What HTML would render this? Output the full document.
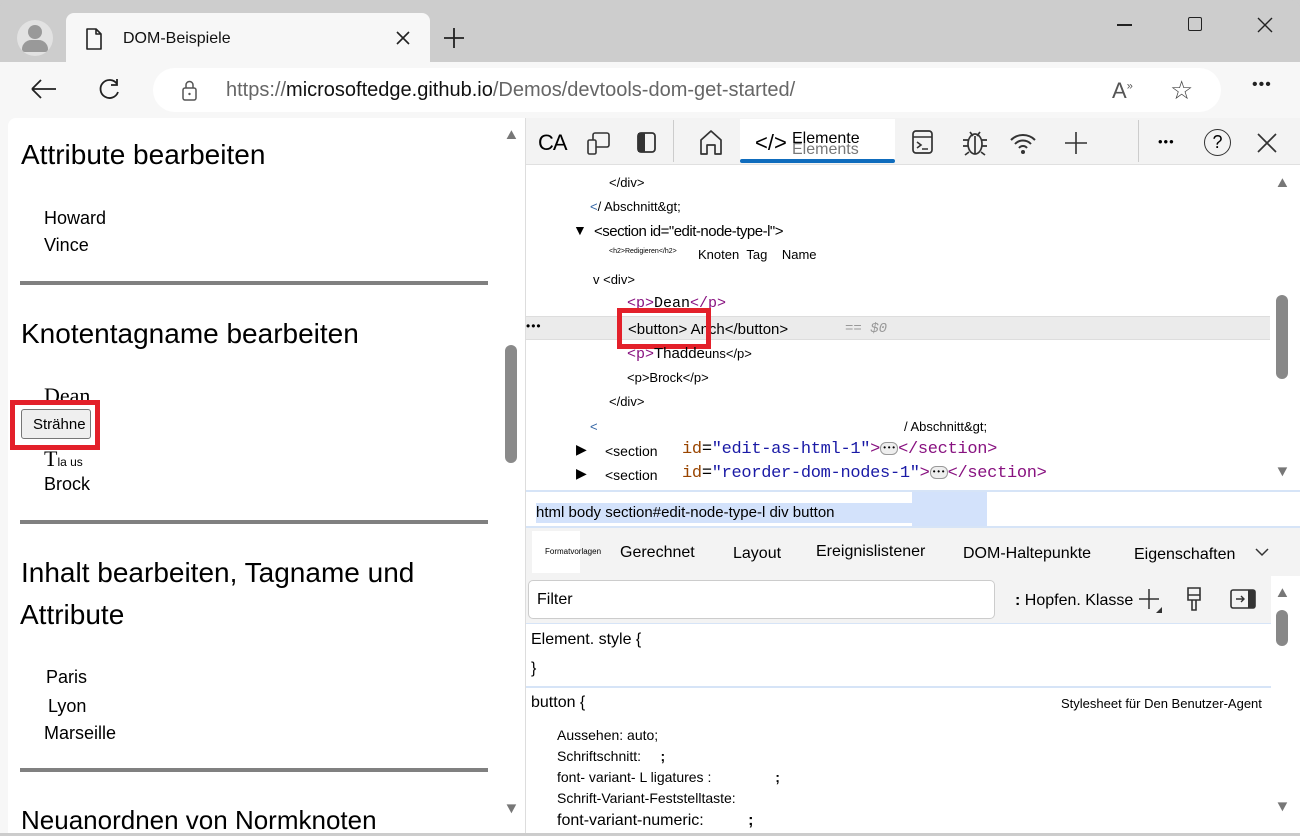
<!DOCTYPE html>
<html><head><meta charset="utf-8"><style>
*{margin:0;padding:0;box-sizing:border-box}
body{width:1300px;height:835px;overflow:hidden;background:#cdcdcd;font-family:"Liberation Sans",sans-serif;position:relative;color:#000}
.a{position:absolute;white-space:nowrap}
.mono{font-family:"Liberation Mono",monospace}
.arr{font-size:15px;color:#777;transform:scaleX(1.1)}
</style></head><body>
<div class="a" style="left:0;top:0;width:1300px;height:62px;background:#cdcdcd;border-radius:8px 8px 0 0"></div>
<div class="a" style="left:17px;top:20px;width:36px;height:36px;border-radius:50%;background:#e2e2e2"></div>
<div class="a" style="left:28px;top:25px;width:14px;height:14px;border-radius:50%;background:#999"></div>
<div class="a" style="left:22px;top:40px;width:26px;height:12px;border-radius:13px 13px 4px 4px;background:#999"></div>
<div class="a" style="left:66px;top:13px;width:364px;height:52px;background:#f7f7f7;border-radius:8px 8px 0 0"></div>
<svg class="a" style="left:84px;top:27px" width="20" height="24" viewBox="0 0 20 24"><path d="M3 2h9l5 5v15H3z M12 2v5h5" fill="none" stroke="#222" stroke-width="1.6" stroke-linejoin="round"/></svg>
<div class="a" style="left:123px;top:30px;font-size:16px;color:#111">DOM-Beispiele</div>
<svg class="a" style="left:395px;top:30px" width="16" height="16"><path d="M2 2l12 12M14 2L2 14" stroke="#222" stroke-width="1.6"/></svg>
<svg class="a" style="left:442px;top:26px" width="24" height="24"><path d="M12 2v20M2 12h20" stroke="#222" stroke-width="1.8"/></svg>
<div class="a" style="left:1117px;top:24px;width:15px;height:1.5px;background:#222"></div>
<div class="a" style="left:1188px;top:17px;width:14px;height:14px;border:1.5px solid #222;border-radius:2px"></div>
<svg class="a" style="left:1257px;top:17px" width="16" height="16"><path d="M1 1l14 14M15 1L1 15" stroke="#222" stroke-width="1.4"/></svg>
<div class="a" style="left:0;top:62px;width:1300px;height:56px;background:#f7f7f7"></div>
<svg class="a" style="left:30px;top:78px" width="28" height="22"><path d="M2 11h24 M2 11l9-9 M2 11l9 9" stroke="#222" stroke-width="1.8" fill="none"/></svg>
<svg class="a" style="left:97px;top:76px" width="26" height="26"><path d="M20 8A9 9 0 1 0 21 16 M20 3v6h-6" stroke="#222" stroke-width="1.8" fill="none"/></svg>
<div class="a" style="left:153px;top:68px;width:1068px;height:44px;background:#fff;border-radius:22px"></div>
<svg class="a" style="left:180px;top:80px" width="20" height="22"><rect x="3" y="8" width="13" height="12" rx="2" fill="none" stroke="#555" stroke-width="1.5"/><path d="M6 8V5a3.5 3.5 0 0 1 7 0v3" fill="none" stroke="#555" stroke-width="1.5"/><circle cx="9.5" cy="14" r="1.2" fill="#555"/></svg>
<div class="a" style="left:226px;top:79px;font-size:20px;color:#666">https://<span style="color:#111">microsoftedge.github.io</span>/Demos/devtools-dom-get-started/</div>
<div class="a" style="left:1112px;top:78px;font-size:22px;color:#555">A<sup style="font-size:11px">»</sup></div>
<div class="a" style="left:1170px;top:75px;font-size:26px;color:#444">☆</div>
<div class="a" style="left:1252px;top:76px;font-size:16px;color:#222;letter-spacing:1px">•••</div>

<div class="a" style="left:0;top:118px;width:525px;height:717px;background:#f7f7f7"></div>
<div class="a" style="left:8px;top:118px;width:517px;height:717px;background:#fff;border-radius:8px 0 0 0"></div>
<div class="a arr" style="left:504px;top:126px">▲</div>
<div class="a arr" style="left:504px;top:800px">▼</div>
<div class="a" style="left:505px;top:345px;width:12px;height:118px;background:#8a8a8a;border-radius:6px"></div>
<div class="a" style="left:21px;top:139px;font-size:28px">Attribute bearbeiten</div>
<div class="a" style="left:44px;top:208px;font-size:18px">Howard</div>
<div class="a" style="left:44px;top:235px;font-size:18px">Vince</div>
<div class="a" style="left:20px;top:281px;width:468px;height:4px;background:#808080"></div>
<div class="a" style="left:21px;top:318px;font-size:28px">Knotentagname bearbeiten</div>
<div class="a" style="left:44px;top:383px;font-size:22px;font-family:'Liberation Serif',serif">Dean</div>
<div class="a" style="left:10px;top:400px;width:90px;height:50px;border:5px solid #e3202a"></div>
<div class="a" style="left:21px;top:409px;width:70px;height:30px;background:#efefef;border:1px solid #767676;border-radius:3px;font-size:15px;padding:6px 0 0 11px">Strähne</div>
<div class="a" style="left:44px;top:446px;font-size:22px;font-family:'Liberation Serif',serif">T<span style="font-family:'Liberation Sans';font-size:12px">la us</span></div>
<div class="a" style="left:44px;top:474px;font-size:18px">Brock</div>
<div class="a" style="left:20px;top:520px;width:468px;height:4px;background:#808080"></div>
<div class="a" style="left:21px;top:557px;font-size:28px">Inhalt bearbeiten, Tagname und</div>
<div class="a" style="left:20px;top:599px;font-size:28px">Attribute</div>
<div class="a" style="left:46px;top:667px;font-size:18px">Paris</div>
<div class="a" style="left:48px;top:696px;font-size:18px">Lyon</div>
<div class="a" style="left:44px;top:723px;font-size:18px">Marseille</div>
<div class="a" style="left:20px;top:768px;width:468px;height:4px;background:#808080"></div>
<div class="a" style="left:21px;top:805px;font-size:26px">Neuanordnen von Normknoten</div>

<div class="a" style="left:525px;top:118px;width:775px;height:717px;background:#fff;border-left:1px solid #ddd"></div>
<div class="a" style="left:526px;top:118px;width:774px;height:47px;background:#f3f3f3;border-bottom:1px solid #e0e0e0"></div>
<div class="a" style="left:538px;top:130px;font-size:22px;letter-spacing:-1px">CA</div>
<svg class="a" style="left:585px;top:130px" width="28" height="28"><rect x="8" y="3" width="16" height="14" rx="2" fill="none" stroke="#333" stroke-width="1.6"/><rect x="3" y="10" width="8" height="14" rx="1.5" fill="#f3f3f3" stroke="#333" stroke-width="1.6"/></svg>
<svg class="a" style="left:635px;top:130px" width="24" height="26"><rect x="3" y="3" width="17" height="19" rx="3" fill="none" stroke="#333" stroke-width="1.8"/><rect x="3" y="3" width="7" height="19" fill="#333"/></svg>
<div class="a" style="left:673px;top:120px;width:1px;height:42px;background:#ccc"></div>
<svg class="a" style="left:697px;top:128px" width="28" height="28"><path d="M4 26V12L14 3l10 9v14h-6v-9h-8v9z" fill="none" stroke="#333" stroke-width="1.7" stroke-linejoin="round"/></svg>
<div class="a" style="left:740px;top:119px;width:155px;height:43px;background:#fff"></div>
<div class="a" style="left:740px;top:159px;width:155px;height:4px;background:#0f6cbd;border-radius:2px"></div>
<div class="a" style="left:755px;top:130px;font-size:22px">&lt;/&gt;</div>
<div class="a" style="left:792px;top:141px;font-size:16px;color:#777">Elements</div>
<div class="a" style="left:792px;top:130px;font-size:16px">Elemente</div>
<svg class="a" style="left:910px;top:128px" width="26" height="28"><rect x="3" y="3" width="19" height="22" rx="3" fill="none" stroke="#333" stroke-width="1.7"/><path d="M3 9h19 M7 14l4 3-4 3 M12 21h6" fill="none" stroke="#333" stroke-width="1.6"/></svg>
<svg class="a" style="left:960px;top:126px" width="30" height="32"><ellipse cx="15" cy="18" rx="7" ry="10" fill="none" stroke="#333" stroke-width="1.7"/><path d="M10 6l3 4 M20 6l-3 4 M8 14H3 M22 14h5 M8 20H3 M22 20h5 M9 26l-4 3 M21 26l4 3 M15 10v18" stroke="#333" stroke-width="1.7" fill="none"/></svg>
<svg class="a" style="left:1008px;top:130px" width="30" height="26"><path d="M3 10a17 17 0 0 1 24 0 M7 14a11 11 0 0 1 16 0 M11 18a5 5 0 0 1 8 0" fill="none" stroke="#333" stroke-width="2"/><circle cx="15" cy="22" r="2" fill="#333"/></svg>
<svg class="a" style="left:1064px;top:131px" width="24" height="24"><path d="M12 1v22M1 12h22" stroke="#333" stroke-width="1.6"/></svg>
<div class="a" style="left:1138px;top:120px;width:1px;height:42px;background:#ccc"></div>
<div class="a" style="left:1158px;top:134px;font-size:13px;letter-spacing:1px">•••</div>
<div class="a" style="left:1204px;top:129px;width:27px;height:27px;border:1.7px solid #333;border-radius:50%;font-size:18px;text-align:center;line-height:24px">?</div>
<svg class="a" style="left:1257px;top:133px" width="20" height="20"><path d="M1 1l18 18M19 1L1 19" stroke="#333" stroke-width="1.7"/></svg>

<div class="a arr" style="left:1275px;top:174px">▲</div>
<div class="a arr" style="left:1275px;top:463px">▼</div>
<div class="a" style="left:1276px;top:295px;width:12px;height:84px;background:#888;border-radius:6px"></div>
<div class="a" style="left:609px;top:175px;font-size:13px">&lt;/div&gt;</div>
<div class="a" style="left:590px;top:199px;font-size:13px"><span style="color:#3465a4">&lt;</span>/ Abschnitt&amp;gt;</div>
<div class="a" style="left:573px;top:222px;font-size:14px">▼</div>
<div class="a" style="left:594px;top:223px;font-size:15px;letter-spacing:-0.5px">&lt;section id="edit-node-type-l"&gt;</div>
<div class="a" style="left:609px;top:248px;font-size:7px">&lt;h2&gt;Redigieren&lt;/h2&gt;</div>
<div class="a" style="left:698px;top:247px;font-size:13px">Knoten &nbsp;Tag &nbsp;&nbsp; Name</div>
<div class="a" style="left:593px;top:272px;font-size:13px">v &lt;div&gt;</div>
<div class="a mono" style="left:627px;top:295px;font-size:15px"><span style="color:#881280">&lt;p&gt;</span>Dean<span style="color:#881280">&lt;/p&gt;</span></div>
<div class="a" style="left:526px;top:316px;width:744px;height:24px;background:#ebebeb;border-top:1px solid #ddd;border-bottom:1px solid #ddd"></div>
<div class="a" style="left:526px;top:319px;font-size:12px;letter-spacing:1px">•••</div>
<div class="a" style="left:628px;top:321px;font-size:15px">&lt;button&gt; Anch&lt;/button&gt;</div>
<div class="a mono" style="left:845px;top:321px;font-size:14px;color:#999;font-style:italic">== $0</div>
<div class="a" style="left:617px;top:308px;width:94px;height:41px;border:5px solid #e3202a"></div>
<div class="a" style="left:627px;top:345px;font-size:15px"><span class="mono" style="color:#881280">&lt;p&gt;</span>Thadde<span style="font-size:13px">uns&lt;/p&gt;</span></div>
<div class="a" style="left:627px;top:370px;font-size:13px">&lt;p&gt;Brock&lt;/p&gt;</div>
<div class="a" style="left:609px;top:394px;font-size:13px">&lt;/div&gt;</div>
<div class="a" style="left:590px;top:419px;font-size:13px;color:#3465a4">&lt;</div>
<div class="a" style="left:904px;top:419px;font-size:13px">/ Abschnitt&amp;gt;</div>
<div class="a" style="left:576px;top:441px;font-size:14px">▶</div>
<div class="a" style="left:605px;top:443px;font-size:14px">&lt;section</div>
<div class="a mono" style="left:682px;top:440px;font-size:17px;letter-spacing:-0.3px"><span style="color:#994500">id</span>=<span style="color:#1a1aa6">"edit-as-html-1"</span><span style="color:#881280">&gt;</span><span style="display:inline-block;width:18px;height:13px;border:1px solid #999;border-radius:6px;font-size:8px;text-align:center;vertical-align:middle;background:#eee;line-height:11px">•••</span><span style="color:#881280">&lt;/section&gt;</span></div>
<div class="a" style="left:576px;top:465px;font-size:14px">▶</div>
<div class="a" style="left:605px;top:467px;font-size:14px">&lt;section</div>
<div class="a mono" style="left:682px;top:464px;font-size:17px;letter-spacing:-0.3px"><span style="color:#994500">id</span>=<span style="color:#1a1aa6">"reorder-dom-nodes-1"</span><span style="color:#881280">&gt;</span><span style="display:inline-block;width:18px;height:13px;border:1px solid #999;border-radius:6px;font-size:8px;text-align:center;vertical-align:middle;background:#eee;line-height:11px">•••</span><span style="color:#881280">&lt;/section&gt;</span></div>

<div class="a" style="left:526px;top:490px;width:774px;height:2px;background:#d6e4f7"></div>
<div class="a" style="left:912px;top:492px;width:75px;height:34px;background:#d3e2fb"></div>
<div class="a" style="left:536px;top:503px;width:377px;height:20px;background:#d3e2fb"></div>
<div class="a" style="left:536px;top:504px;font-size:15px">html body section#edit-node-type-l div button</div>
<div class="a" style="left:526px;top:526px;width:774px;height:2px;background:#d6e4f7"></div>
<div class="a" style="left:526px;top:528px;width:774px;height:48px;background:#f3f3f3"></div>
<div class="a" style="left:532px;top:531px;width:48px;height:42px;background:#fff"></div>
<div class="a" style="left:545px;top:547px;font-size:8px">Formatvorlagen</div>
<div class="a" style="left:620px;top:544px;font-size:16px">Gerechnet</div>
<div class="a" style="left:733px;top:545px;font-size:16px">Layout</div>
<div class="a" style="left:816px;top:543px;font-size:16px">Ereignislistener</div>
<div class="a" style="left:963px;top:545px;font-size:16px">DOM-Haltepunkte</div>
<div class="a" style="left:1134px;top:546px;font-size:16px">Eigenschaften</div>
<svg class="a" style="left:1255px;top:548px" width="14" height="10"><path d="M1 1l6 6 6-6" fill="none" stroke="#333" stroke-width="1.5"/></svg>
<div class="a" style="left:526px;top:576px;width:745px;height:48px;background:#f3f3f3;border-bottom:1px solid #d6e4f7"></div>
<div class="a" style="left:528px;top:580px;width:467px;height:39px;background:#fff;border:1px solid #ccc;border-radius:5px"></div>
<div class="a" style="left:537px;top:591px;font-size:16px">Filter</div>
<div class="a" style="left:1015px;top:592px;font-size:16px"><b>:</b> Hopfen. Klasse</div>
<svg class="a" style="left:1138px;top:588px" width="26" height="26"><path d="M11 1v20M1 11h20" stroke="#333" stroke-width="1.5"/><path d="M24 19v6h-6z" fill="#333"/></svg>
<svg class="a" style="left:1183px;top:586px" width="22" height="28"><path d="M5 2h12v12H5z M5 9h12 M9 14v10h4V14" fill="none" stroke="#333" stroke-width="1.6"/></svg>
<svg class="a" style="left:1229px;top:588px" width="28" height="24"><rect x="2" y="2" width="24" height="18" rx="2" fill="none" stroke="#333" stroke-width="1.6"/><rect x="19" y="2" width="7" height="18" fill="#333"/><path d="M7 11h8 M12 8l3 3-3 3" fill="none" stroke="#333" stroke-width="1.4"/></svg>
<div class="a arr" style="left:1275px;top:584px">▲</div>
<div class="a arr" style="left:1275px;top:798px">▼</div>
<div class="a" style="left:1276px;top:610px;width:12px;height:36px;background:#888;border-radius:6px"></div>
<div class="a" style="left:531px;top:631px;font-size:16px">Element. style {</div>
<div class="a" style="left:531px;top:660px;font-size:16px">}</div>
<div class="a" style="left:526px;top:686px;width:745px;height:2px;background:#d6e4f7"></div>
<div class="a" style="left:531px;top:694px;font-size:16px">button {</div>
<div class="a" style="left:1061px;top:696px;font-size:13px">Stylesheet für Den Benutzer-Agent</div>
<div class="a" style="left:557px;top:727px;font-size:14px">Aussehen: auto;</div>
<div class="a" style="left:557px;top:748px;font-size:14px">Schriftschnitt: &nbsp;&nbsp;&nbsp;&nbsp;<b>;</b></div>
<div class="a" style="left:557px;top:769px;font-size:14px">font- variant- L ligatures : <span style="padding-left:60px"><b>;</b></span></div>
<div class="a" style="left:557px;top:790px;font-size:14px">Schrift-Variant-Feststelltaste:</div>
<div class="a" style="left:557px;top:812px;font-size:16px">font-variant-numeric: <span style="padding-left:40px"><b>;</b></span></div>
<div class="a" style="left:0;top:833px;width:1300px;height:2px;background:#ccc"></div>
</body></html>
